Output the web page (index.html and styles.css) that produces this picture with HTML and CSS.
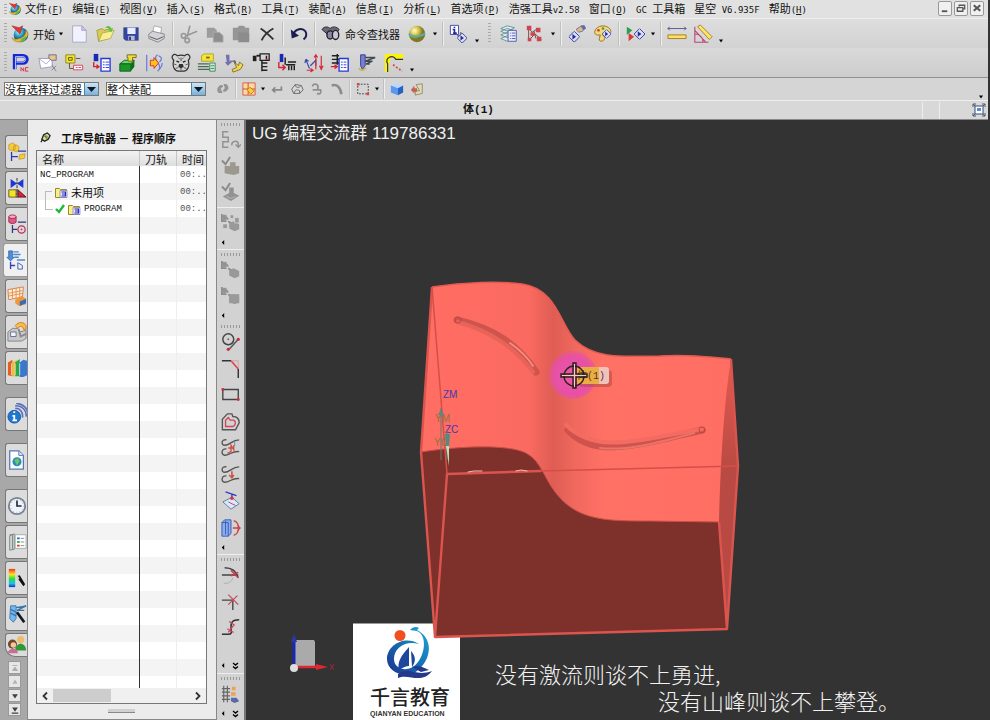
FILE: index.html
```html
<!DOCTYPE html>
<html lang="zh-CN">
<head>
<meta charset="utf-8">
<title>工序导航器</title>
<link rel="stylesheet" href="styles.css">
</head>
<body>
<svg class="defs" aria-hidden="true">
  <defs>
    <linearGradient id="blue" x1="0" y1="0" x2="1" y2="1"><stop offset="0" stop-color="#8cc6f4"/><stop offset="1" stop-color="#1c4fb4"/></linearGradient>
    <radialGradient id="gold" cx=".35" cy=".3"><stop offset="0" stop-color="#fffce0"/><stop offset=".5" stop-color="#d8c84c"/><stop offset="1" stop-color="#7c7a28"/></radialGradient>
    <radialGradient id="globe" cx=".35" cy=".3"><stop offset="0" stop-color="#b8f0ff"/><stop offset=".6" stop-color="#2a9ac8"/><stop offset="1" stop-color="#145a80"/></radialGradient>
    <linearGradient id="spectrum" x1="0" y1="0" x2="0" y2="1"><stop offset="0" stop-color="#f03020"/><stop offset=".3" stop-color="#ffe020"/><stop offset=".55" stop-color="#20e040"/><stop offset=".8" stop-color="#20c0f0"/><stop offset="1" stop-color="#1030d0"/></linearGradient>
    <symbol id="nx" viewBox="0 0 22 22"><circle cx="12" cy="12" r="8" fill="url(#globe)"/><path d="M2 15c3 7 12 6 17-1 2-4 0-6-2-7 1 4-2 8-7 9-3 1-6 1-8-1z" fill="#e8b830" stroke="#8a7020" stroke-width=".5"/><path d="M12 17l6-4c0 4-2 7-6 7z" fill="#58b850"/><path d="M2 2l8 2 4-2-3 9z" fill="#e03830" stroke="#902020" stroke-width=".5"/></symbol>
    <symbol id="caret" viewBox="0 0 6 4"><path d="M1 0.5h4L3 3.5z" fill="#000"/></symbol>
    <symbol id="diamond" viewBox="0 0 12 12"><path d="M6 0l6 6-6 6-6-6z" fill="#d8dcf8" stroke="#2c3a98"/><path d="M4 3l4 3-4 3z" fill="#202c90"/></symbol>
    <symbol id="folder" viewBox="0 0 13 12"><path d="M.5 2.500h4l1 1h6v8H.5z" fill="#f8f080" stroke="#968a30"/><path d="M5 4.500h7v7H5z" fill="#e8e8ff" stroke="#6868b0" stroke-width=".6"/><path d="M6.500 6h4v4h-4M7 8h3" stroke="#2828b8" fill="none" stroke-width="1.200"/></symbol>
    <symbol id="chain" viewBox="0 0 22 22"><path d="M1 4h4l3 3M1 1v8h5M8 9l4 3" fill="none" stroke="#8d8d8d" stroke-width="2"/><path d="M9 11l5-2 6 3v6l-5 2-6-3z" fill="#999"/><path d="M2 2h4v6H2z" fill="#949494"/></symbol>
  </defs>
</svg>

<header class="chrome">
  <nav class="menubar">
    <span class="grip"></span>
    <svg class="brand"><use href="#nx"/></svg>
    <a href="#">文件<span class="en">(<u>F</u>)</span></a>
    <a href="#">编辑<span class="en">(<u>E</u>)</span></a>
    <a href="#">视图<span class="en">(<u>V</u>)</span></a>
    <a href="#">插入<span class="en">(<u>S</u>)</span></a>
    <a href="#">格式<span class="en">(<u>R</u>)</span></a>
    <a href="#">工具<span class="en">(<u>T</u>)</span></a>
    <a href="#">装配<span class="en">(<u>A</u>)</span></a>
    <a href="#">信息<span class="en">(<u>I</u>)</span></a>
    <a href="#">分析<span class="en">(<u>L</u>)</span></a>
    <a href="#">首选项<span class="en">(<u>P</u>)</span></a>
    <a href="#">浩强工具<span class="en">v2.58</span></a>
    <a href="#">窗口<span class="en">(<u>O</u>)</span></a>
    <a href="#"><span class="en">GC </span>工具箱</a>
    <a href="#">星空<span class="en"> V6.935F</span></a>
    <a href="#">帮助<span class="en">(<u>H</u>)</span></a>
    <div class="winbtns">
      <button aria-label="最小化"><svg viewBox="0 0 13 13"><path d="M3 10h6" stroke="#555" stroke-width="2"/></svg></button>
      <button aria-label="还原"><svg viewBox="0 0 13 13"><path d="M4.500 5V3.500h6v4H9M2.500 6h6v4h-6z" fill="none" stroke="#555" stroke-width="1.400"/></svg></button>
      <button aria-label="关闭"><svg viewBox="0 0 13 13"><path d="M3 3.500l7 6M10 3.500l-7 6" stroke="#555" stroke-width="2.200"/></svg></button>
    </div>
  </nav>

  <div class="toolbar standard">
    <span class="grip"></span>
    <button class="wide start"><svg class="ic"><use href="#nx"/></svg>开始<svg class="caret"><use href="#caret"/></svg></button>
    <button aria-label="新建"><svg class="ic" viewBox="0 0 22 22"><path d="M4 2h10l5 5v13H4z" fill="#f2f2fe" stroke="#a4a4cc"/><path d="M14 2v5h5z" fill="#c8c8ea" stroke="#a4a4cc"/></svg></button>
    <button aria-label="打开"><svg class="ic" viewBox="0 0 22 22"><path d="M2 7l6-2 2 2 7-2v10L4 19z" fill="#d8cc58" stroke="#8c8430" stroke-width=".7"/><path d="M4 19L8 10l13-3-4 9z" fill="#f8f090" stroke="#a09838" stroke-width=".7"/><path d="M11 4c3-3 6-2 7 1l2-1-2 5-4-3 2 0c-1-2-3-2-5-2z" fill="#60c048"/></svg></button>
    <button aria-label="保存"><svg class="ic" viewBox="0 0 22 22"><path d="M3 4h16v14H5l-2-2z" fill="#3646a0" stroke="#28347c" stroke-width=".6"/><path d="M7 4h9v7H7z" fill="#e8ecff"/><path d="M8 13h7v5H8z" fill="#b8bcd0"/><path d="M9 14h2v4H9z" fill="#28347c"/></svg></button>
    <button aria-label="打印"><svg class="ic" viewBox="0 0 22 22"><path d="M6 10l2-8 8 2-1 7z" fill="#fff" stroke="#888" stroke-width=".7"/><path d="M2 11l4-3 13 3v5l-7 4-10-4z" fill="#d4d4d8" stroke="#70707a" stroke-width=".8"/><path d="M3 14l8 3 7-3" fill="none" stroke="#505058"/></svg></button>
    <i class="sep"></i>
    <button aria-label="剪切"><svg class="ic" viewBox="0 0 22 22"><g fill="none" stroke="#989898" stroke-width="1.800"><path d="M12 2L9 14M20 8L8 13"/><circle cx="5" cy="13" r="2.500"/><circle cx="9" cy="18" r="2.500"/></g></svg></button>
    <button aria-label="复制"><svg class="ic" viewBox="0 0 22 22"><path d="M2 4h8l3 3v8H2z" fill="#9c9c9c"/><path d="M9 9h7l4 4v7H9z" fill="#8e8e8e" stroke="#b8b8b8" stroke-width=".7"/></svg></button>
    <button aria-label="粘贴"><svg class="ic" viewBox="0 0 22 22"><path d="M2 4h5l2-2h5l2 2h4v14H2z" fill="#969696"/><path d="M8 9h10l2 2v9H8z" fill="#8c8c8c"/></svg></button>
    <button aria-label="删除"><svg class="ic" viewBox="0 0 22 22"><path d="M4 5c5 3 9 7 14 12M18 5C12 8 8 12 5 18" fill="none" stroke="#303030" stroke-width="2"/></svg></button>
    <i class="sep"></i>
    <button aria-label="撤消"><svg class="ic" viewBox="0 0 22 22"><path d="M5 11c2-6 10-7 13-3 2 3 1 7-2 9" fill="none" stroke="#1c1c50" stroke-width="2.200"/><path d="M2 6l1 10 8-3z" fill="#1c1c50"/></svg></button>
    <i class="sep"></i>
    <button class="wide finder"><svg class="ic" viewBox="0 0 22 22"><path d="M1 6c3-4 7-3 9-1 3-3 7-2 10 1l-4 5-8 1z" fill="#6a6a76" stroke="#202028"/><ellipse cx="10" cy="12" rx="3.500" ry="4.500" fill="#8888a0" stroke="#202028" stroke-width="1.500"/><ellipse cx="16" cy="12" rx="3.500" ry="5" fill="#c8c8d8" stroke="#202028" stroke-width="1.500"/></svg>命令查找器</button>
    <button aria-label="显示"><svg class="ic" viewBox="0 0 22 22"><circle cx="11" cy="11" r="9" fill="url(#gold)"/><path d="M2 11c4 4 14 3 18-1" fill="none" stroke="#58b0b0" stroke-width="2"/></svg></button>
    <button class="drop" aria-label="更多"><svg class="caret"><use href="#caret"/></svg></button>
    <i class="sep"></i>
    <button aria-label="信息"><svg class="ic" viewBox="0 0 22 22"><path d="M1.500 1.500h9v10h-9z" fill="#fff" stroke="#3840a0"/><path d="M6 3v1.500M4 6h2v4M4.500 10h4" stroke="#2028a8" stroke-width="1.800" fill="none"/><path d="M9 13h4M13 9v5" stroke="#333"/><use href="#diamond" x="9" y="10" width="11" height="11"/></svg></button>
    <button class="drop low" aria-label="更多"><svg class="caret"><use href="#caret"/></svg></button>
    <span class="grip second"></span>
    <button aria-label="图层"><svg class="ic" viewBox="0 0 22 22"><g fill="#dcebeb" stroke="#4a8080" stroke-width=".8"><path d="M2 16l7-3 7 2-7 4zM2 12l7-3 7 2-7 4zM2 8l7-3 7 2-7 4zM2 5l7-3 8 2-7 4z"/></g><path d="M10 7h9v12h-9z" fill="#eef" stroke="#4858b0"/><path d="M12 10h1M14 10h4M12 13h1M14 13h4M12 16h1M14 16h4" stroke="#4050a8"/></svg></button>
    <button aria-label="装配导航"><svg class="ic" viewBox="0 0 22 22"><path d="M4 5l4 4 6-4M4 5v12M5 17l6-6 7 6M10 8l2 8" fill="none" stroke="#604848"/><g fill="#d04450"><path d="M2 2h5v5H2zM12 4h5v5h-5zM6 9h5v4H6zM13 14h5v5h-5zM3 15h4v4H3z"/></g></svg></button>
    <button class="drop" aria-label="更多"><svg class="caret"><use href="#caret"/></svg></button>
    <i class="sep"></i>
    <button aria-label="编辑对象"><svg class="ic" viewBox="0 0 22 22"><path d="M10 6l6-4 4 2-3 4-4 1z" fill="#e0b878" stroke="#6870a8"/><path d="M15 2l4-1 2 4-3 2z" fill="#606cb0"/><use href="#diamond" x="2" y="8" width="12" height="12"/></svg></button>
    <button aria-label="调色板"><svg class="ic" viewBox="0 0 22 22"><path d="M2 8c2-7 13-8 17-2 2 4-1 5-4 4l-5 1 3 4c0 4-7 6-6 1l1-4c-4 1-7-1-6-4z" fill="#f4d878" stroke="#906c28"/><circle cx="6" cy="7" r="1.500" fill="#d04040"/><circle cx="11" cy="5" r="1.500" fill="#50a050"/><use href="#diamond" x="10" y="6" width="10" height="10"/></svg></button>
    <i class="sep"></i>
    <button aria-label="显示隐藏"><svg class="ic" viewBox="0 0 22 22"><path d="M2 3l6 4-6 5z" fill="#28a048"/><path d="M4 10l6 4-6 5z" fill="#d83838"/><use href="#diamond" x="10" y="5" width="12" height="12"/></svg></button>
    <button class="drop" aria-label="更多"><svg class="caret"><use href="#caret"/></svg></button>
    <i class="sep"></i>
    <button aria-label="测量距离"><svg class="ic" viewBox="0 0 22 22"><path d="M1 5h20M3 3L1 5l2 2M19 3l2 2-2 2" fill="none" stroke="#505098"/><path d="M1 12h20v4H1z" fill="#ffe060" stroke="#a07c28"/></svg></button>
    <button aria-label="测量角度"><svg class="ic" viewBox="0 0 22 22"><path d="M2 3v17h15M2 11c5 0 9 3 9 9M2 7l12 13" fill="none" stroke="#b84870" stroke-width="1.200"/><path d="M5 3l3-2 13 13-3 3z" fill="#ffe468" stroke="#a07c28"/></svg></button>
    <button class="drop low" aria-label="更多"><svg class="caret"><use href="#caret"/></svg></button>
  </div>

  <div class="toolbar machining">
    <span class="grip"></span>
    <div class="even">
      <button aria-label="创建程序"><svg class="ic" viewBox="0 0 22 22"><path d="M4 18V3h9c6 0 6 8 0 8H6" fill="none" stroke="#1828d0" stroke-width="4"/><path d="M5 18V4h8c4 0 4 6 0 6H6" fill="none" stroke="#c8d8ff"/><path d="M11 20v-4l3 4v-4M19 16h-3v4h3" fill="none" stroke="#e02848"/></svg></button>
      <button aria-label="创建刀具"><svg class="ic" viewBox="0 0 22 22"><path d="M1 6h14l1 9-13 2z" fill="#fff" stroke="#9898b8"/><path d="M2 7l7 5 6-6" stroke="#a8a8c8" fill="none"/><path d="M12 2h8v6h-5l-3-2z" fill="#e8c880" stroke="#6868a0"/><path d="M15 13l5 7M20 14l-5 5" stroke="#78789c"/></svg></button>
      <button aria-label="创建几何体"><svg class="ic" viewBox="0 0 22 22"><path d="M2 2h10v9H2z" fill="#f2e430" stroke="#8c841c"/><path d="M5 8V5h4v3zM13 6h5M6 11v6h4" stroke="#5c5410" fill="none"/><path d="M10.500 13.500h10v5h-10z" fill="#fff" stroke="#d83858"/><path d="M13 16h2m1 0h3" stroke="#d83858"/></svg></button>
      <button aria-label="创建方法"><svg class="ic" viewBox="0 0 22 22"><path d="M3 1h5v8H3z" fill="#1828b8"/><path d="M3 10v5h5" fill="none" stroke="#d82030" stroke-width="1.500"/><path d="M6 12l4 3-4 3z" fill="#d82030"/><path d="M11 6h10v14H11z" fill="#fff" stroke="#2838d8" stroke-width="1.500"/><path d="M13 10h2m1 0h4m-7 3h2m1 0h4m-7 3h2m1 0h4" stroke="#2838d8"/></svg></button>
      <button aria-label="创建工序"><svg class="ic" viewBox="0 0 22 22"><path d="M2 12l5-4h11l-4 4z" fill="#68d868" stroke="#145c18"/><path d="M2 12h12v8H2z" fill="#189828" stroke="#145c18"/><path d="M14 12l4-4v7l-4 5z" fill="#0c7018"/><path d="M10 2h10v3h-4v4h-5V5h-1z" fill="#f0dc38" stroke="#706818"/></svg></button>
      <button aria-label="生成刀轨"><svg class="ic" viewBox="0 0 22 22"><path d="M3 2v18M15 2c-8 5 8 11 0 18M16 3c5 2 3 5 1 7M20 11c0 5-2 5-4 8" fill="none" stroke="#6878d8" stroke-width="1.300"/><path d="M7 8h4V5l5 6-5 6v-3H7z" fill="#ffc818" stroke="#d82830"/></svg></button>
      <button aria-label="小熊工具"><svg class="ic" viewBox="0 0 22 22"><path d="M3 8C-1 4 3-1 7 3c3-1 5-1 8 0 4-4 8 1 4 5 2 7-1 12-5 12H8C4 20 1 15 3 8z" fill="#d4d4d4" stroke="#303030" stroke-width="1.300"/><path d="M6 9l3 1M13 10l3-1" stroke="#202020" stroke-width="1.500"/><path d="M9 12h4l1 3-3 2-3-2z" fill="#303030"/><path d="M3 12l3 1m10 0l3-1M5 17l3-1m6 0l3 1M11 5v4M8 5l2 2m4-2l-2 2M11 16v3" stroke="#555" fill="none"/></svg></button>
      <button aria-label="确认刀轨"><svg class="ic" viewBox="0 0 22 22"><path d="M5 3l3-2h10v8H5z" fill="#f4e438" stroke="#b0a428"/><path d="M10 5h4" stroke="#806c10" stroke-width="2"/><path d="M1 12h12M1 15h12M1 18h14" stroke="#486c58" stroke-width="1.500"/><path d="M14 11h6v9h-6z" fill="#c8f0d0" stroke="#408060"/><path d="M15 14h4m-4 3h4" stroke="#408060"/></svg></button>
      <button aria-label="机床"><svg class="ic" viewBox="0 0 22 22"><path d="M2 2h4v8h3L4 14 1 10h2z" fill="#7470b0"/><path d="M6 9h7M11 8l2 3" stroke="#484878"/><path d="M11 10l5 4 1-4 4 3-3 5-8 3-1-3 5-2z" fill="#f4d850" stroke="#806c28"/></svg></button>
      <button aria-label="程序顺序"><svg class="ic" viewBox="0 0 22 22"><path d="M2 3h4v6H2z" fill="#202020"/><path d="M6 3h4" stroke="#202020" stroke-width="2"/><path d="M10 1h10v7H10z" fill="none" stroke="#202020" stroke-width="1.400"/><path d="M12 8v12M12 11h6M12 15h6M12 19h6M17 3v4" stroke="#202020" fill="none" stroke-width="1.600"/><path d="M16 7h4" stroke="#d82840"/></svg></button>
      <button aria-label="后处理"><svg class="ic" viewBox="0 0 22 22"><path d="M3 1h4v9H3z" fill="#1828b8"/><path d="M2 10v6h6M6 13l3 3-3 3" fill="none" stroke="#d82030" stroke-width="1.500"/><path d="M9 5v8M10 13h10M12 10h9M13 14v5m3-5v5m3-5v5" stroke="#202020" stroke-width="1.600"/></svg></button>
      <button aria-label="变换"><svg class="ic" viewBox="0 0 22 22"><path d="M2 7l4 10M2 7l-1 4m1-4l3 2M7 14l6-6v6" fill="none" stroke="#3848b0" stroke-width="1.300"/><path d="M13 3v15M11 5l2-3 2 3M19 3v14M17 14l2 4 2-4M3 19h6m-2-2l3 2-3 2" fill="none" stroke="#d82838" stroke-width="1.300"/></svg></button>
      <button aria-label="车间文档"><svg class="ic" viewBox="0 0 22 22"><path d="M2 3h8M2 7h8M2 11h8M8 1v12" stroke="#202020" stroke-width="1.600"/><path d="M1 15h5m-1-2l3 2-3 2" stroke="#d82030" stroke-width="1.500" fill="none"/><path d="M10 6h10v14H10z" fill="#fff" stroke="#2838d8" stroke-width="1.500"/><path d="M12 10h2m1 0h3m-6 3h2m1 0h3m-6 3h2m1 0h3" stroke="#2838d8"/></svg></button>
      <button aria-label="刀轨"><svg class="ic" viewBox="0 0 22 22"><path d="M4 2h5v12l-3 4-2-4z" fill="#7880d0" stroke="#303890"/><path d="M9 5h11L9 9h8l-7 3h4" fill="none" stroke="#404850" stroke-width="1.600"/><path d="M2 17c3 3 6 2 8-1" stroke="#c8b850" stroke-width="2" fill="none"/></svg></button>
      <button aria-label="倒角"><svg class="ic" viewBox="0 0 22 22"><path d="M1 1h20v5h-8c-3-4-7-1-6 3l-2 3v9H1z" fill="#fff500"/><path d="M4 21v-9c-4-7 6-11 9-5h8" fill="none" stroke="#303820" stroke-width="1.300"/><path d="M10 13l10 7" stroke="#d84040" stroke-width="2" stroke-dasharray="2 2"/></svg></button>
    </div>
    <button class="drop low" aria-label="更多"><svg class="caret"><use href="#caret"/></svg></button>
  </div>

  <div class="selection">
    <div class="combo filter"><select aria-label="过滤器"><option>没有选择过滤器</option></select><i><svg viewBox="0 0 13 12"><path d="M2 4h9l-4.500 5z" fill="#101820"/></svg></i></div>
    <div class="combo scope"><select aria-label="范围"><option>整个装配</option></select><i><svg viewBox="0 0 13 12"><path d="M2 4h9l-4.500 5z" fill="#101820"/></svg></i></div>
    <button aria-label="重置"><svg class="sm" viewBox="0 0 16 16"><path d="M3 12C0 7 5 2 8 5c-4 1-3 4-1 7zM12 3c4 4 0 9-4 7 3-2 3-5 1-7z" fill="#999" stroke="#888"/></svg></button>
    <i class="sep"></i>
    <button aria-label="捕捉"><svg class="sm" viewBox="0 0 16 16"><path d="M1 1h14v14H1z" fill="#f8dc98" stroke="#d85050"/><path d="M7 1v14M1 8h14" stroke="#d03c3c"/><path d="M6 9l3-3 5 4-4 4z" fill="#f8d038" stroke="#c07828"/></svg></button>
    <button class="mini" aria-label="更多"><svg class="caret"><use href="#caret"/></svg></button>
    <button aria-label="返回"><svg class="sm" viewBox="0 0 16 16"><path d="M13 5v4H4M6 6L3 9l3 3" fill="none" stroke="#888" stroke-width="2"/></svg></button>
    <button aria-label="实体"><svg class="sm" viewBox="0 0 16 16"><path d="M2 8l4-5 7 1 2 5-4 4-7 0z" fill="#d8d8d8" stroke="#606060"/><path d="M6 3c1 4 3 4 6 2M5 13c0-4 3-5 6-3v3" fill="none" stroke="#606060"/></svg></button>
    <button aria-label="移动"><svg class="sm" viewBox="0 0 16 16"><path d="M3 5c0-4 7-3 6 1v3M3 9h10M8 13c4 2 5-1 4-4" fill="none" stroke="#909090" stroke-width="2"/></svg></button>
    <button aria-label="曲线"><svg class="sm" viewBox="0 0 16 16"><path d="M2 4c6-2 10 2 11 10" fill="none" stroke="#8c8c8c" stroke-width="3"/></svg></button>
    <i class="sep"></i>
    <button aria-label="框选"><svg class="sm" viewBox="0 0 16 16"><path d="M2 2.500h12v11H2z" fill="none" stroke="#303030" stroke-dasharray="2 1.500"/><path d="M1 1h3v3H1zM12 12h3v3h-3z" fill="#d84848"/></svg></button>
    <button class="mini" aria-label="更多"><svg class="caret"><use href="#caret"/></svg></button>
    <i class="sep"></i>
    <button aria-label="着色"><svg class="sm" viewBox="0 0 16 16"><path d="M1 4l7-3 7 3-6 3z" fill="#b8d8ff"/><path d="M1 4l8 3v8l-8-3z" fill="#5898f0"/><path d="M15 4L9 7v8l6-3z" fill="#2c60c0"/></svg></button>
    <button aria-label="视图"><svg class="sm" viewBox="0 0 16 16"><path d="M7 3l7-1v11l-8 2v-5h5z" fill="#e0dcb0" stroke="#8c8868"/><path d="M1 9l4-5v3h3v4H5v2z" fill="#c86050"/></svg></button>
    <button class="drop end" aria-label="更多"><svg class="caret"><use href="#caret"/></svg></button>
  </div>

  <div class="status">
    <output>体(1)</output>
    <i class="cell"></i><i class="cell"></i>
    <button aria-label="全屏"><svg viewBox="0 0 14 14"><path d="M3 3h8v8H3z" fill="#fff" stroke="#304880"/><path d="M5 5h4v3H5z" fill="#5c88d0"/><path d="M1 4V1h3M10 1h3v3M13 10v3h-3M4 13H1v-3M1 1l2 2M13 1l-2 2M1 13l2-2M13 13l-2-2" fill="none" stroke="#505860"/></svg></button>
  </div>
</header>

<main class="workspace">
  <nav class="tabs">
    <button aria-label="装配导航器"><svg viewBox="0 0 22 24"><g fill="#f8cc38" stroke="#b88818" stroke-width=".7"><path d="M2 4l4-2 3 2v5l-3 2-4-2zM7 6l3-2 3 2v4l-3 2-3-2zM14 15l6-1-1 5-6 1z"/></g><path d="M5 12v10M5 17h7M12 11h9" stroke="#2838a8" stroke-width="1.400"/></svg></button>
    <button aria-label="约束导航器"><svg viewBox="0 0 22 24"><path d="M4 2l7 5-7 5zM18 2l-7 5 7 5z" fill="#1c38d0"/><path d="M2 14h8v8H2z" fill="#f4e428" stroke="#605c20"/><path d="M12 14v8h9z" fill="#d02838" stroke="#601018"/><path d="M11 1v22" stroke="#222" stroke-dasharray="3 1"/></svg></button>
    <button aria-label="部件导航器"><svg viewBox="0 0 22 24"><path d="M2 4v6c2 2 6 2 8 0V4z" fill="#e05888" stroke="#a02850"/><ellipse cx="6" cy="4" rx="4" ry="2" fill="#f8a8c0" stroke="#a02850"/><path d="M6 13v9M6 18h5M12 10h9" stroke="#303878" stroke-width="1.400"/><circle cx="16" cy="18" r="4" fill="none" stroke="#b83060" stroke-width="1.400"/><circle cx="16" cy="18" r="1" fill="#b83060"/></svg></button>
    <button class="active" aria-label="工序导航器"><svg viewBox="0 0 22 24"><path d="M3 2h4v7h2l-4 4-4-4h2z" fill="#5090d8" stroke="#3070b8"/><path d="M8 3h6M8 6h8M9 9h5M12 12h9" stroke="#4c88c8" stroke-width="1.500"/><path d="M5 14v8M5 18h5" stroke="#3840c0" stroke-width="1.500"/><path d="M13 15l5 3v4h-5z" fill="none" stroke="#3858b8"/></svg></button>
    <button aria-label="加工特征"><svg viewBox="0 0 22 24"><path d="M1 5l17-3-1 11-15 3z" fill="#fff0d0" stroke="#d87848"/><path d="M2 9l15-3M2 12l15-3M6 4v11M10 3v11M14 3v10" stroke="#e08c58"/><path d="M9 16l7-4 5 3v6l-8 2-4-3z" fill="#f09838"/><path d="M14 18l7-3v5l-7 3z" fill="#386cb8"/></svg></button>
    <button aria-label="机床导航"><svg viewBox="0 0 22 24"><path d="M9 5c4-5 10-4 12 0v4h-3c0-4-4-4-6-1z" fill="#f4c040" stroke="#d87030"/><path d="M1 12l5-4h6l2 4 7-2v9l-5 3H1z" fill="#c8c8c8" stroke="#808080"/><path d="M4 12h6v5H4z" fill="#f8f8f8" stroke="#5868a0"/><path d="M13 9l2 8 6-3" fill="none" stroke="#888" stroke-width="2"/></svg></button>
    <button aria-label="重用库"><svg viewBox="0 0 22 24"><path d="M1 6l5-3v18l-5-1z" fill="#e06020"/><path d="M6 6l5-3v18H6z" fill="#f4bc38"/><path d="M9 6l5-4v19H9z" fill="#28a848"/><path d="M14 6l4-3 4 1v16l-4 2h-4z" fill="#3878d0"/><path d="M5 7v13M9 7v13M14 7v13" stroke="#fff" stroke-width=".7"/></svg></button>
    <button class="spaced" aria-label="网络"><svg viewBox="0 0 22 24"><path d="M9 6c5-1 9 4 8 10M9 3c7-1 13 5 12 12M10 0c8 1 13 6 13 12" fill="none" stroke="#5c70c0" stroke-width="1.800"/><circle cx="8" cy="15" r="7" fill="#1c78d0" stroke="#1858a0"/><path d="M7 10h2M6 14h2v5M6 19h5" stroke="#fff" stroke-width="2" fill="none"/></svg></button>
    <button class="spaced" aria-label="浏览器"><svg viewBox="0 0 22 24"><path d="M3 2h10l5 5v15H3z" fill="#fff" stroke="#5878b8" stroke-width="1.400"/><path d="M13 2v5h5" fill="#d8e4f8" stroke="#5878b8"/><circle cx="11" cy="14" r="5" fill="#2c8cb8"/><path d="M8 12l4-2 2 3-3 5z" fill="#68c868"/></svg></button>
    <button class="spaced" aria-label="历史"><svg viewBox="0 0 22 24"><circle cx="11" cy="12" r="9" fill="#f0f4fa" stroke="#788494" stroke-width="2"/><circle cx="11" cy="12" r="7" fill="none" stroke="#9ca8b8" stroke-dasharray="1 2.600"/><path d="M11 6v6h5" fill="none" stroke="#202838" stroke-width="1.800"/></svg></button>
    <button aria-label="系统材料"><svg viewBox="0 0 22 24"><path d="M3 5l5-2v17l-5 1zM3 4h3v16" fill="#d4d8d8" stroke="#788080"/><path d="M9 4h12v15H9z" fill="#fff" stroke="#a0a8a8"/><path d="M11 7h3v2h-3z" fill="#3070d0"/><path d="M11 11h3v2h-3z" fill="#30b040"/><path d="M11 15h3v2h-3z" fill="#e04040"/><path d="M15 8h4m-4 4h4m-4 4h4" stroke="#888"/></svg></button>
    <button aria-label="颜色"><svg viewBox="0 0 22 24"><path d="M2 2h7v20H2z" fill="url(#spectrum)"/><path d="M10 10l4-1 6 10-2 2z" fill="#101010"/><path d="M10 9l3 4" stroke="#d8d8d8" stroke-width="2"/></svg></button>
    <button aria-label="刀具"><svg viewBox="0 0 22 24"><path d="M4 3h6v14l-3 4-4-4z" fill="#78b8e8" stroke="#3878b0"/><path d="M4 7l6 3m-6 1l6 3M10 5l11-2-10 5h8" stroke="#3874b0" stroke-width="1.500" fill="none"/><path d="M11 10l8 11" stroke="#101820" stroke-width="3"/></svg></button>
    <button class="clip" aria-label="角色"><svg viewBox="0 0 22 24"><circle cx="15" cy="6" r="4" fill="#f0bc68"/><path d="M9 18c0-10 12-10 12 0z" fill="#309838"/><circle cx="6" cy="11" r="5" fill="#704828"/><circle cx="7" cy="12" r="3" fill="#f0c8a0"/><path d="M1 21c0-6 11-6 11 0z" fill="#c86c98"/></svg></button>
    <div class="steppers">
      <button aria-label="首页"><svg viewBox="0 0 12 12"><path d="M3 3h6M6 5l3 4H3z" stroke="#aaa" fill="#aaa"/></svg></button>
      <button aria-label="上移"><svg viewBox="0 0 12 12"><path d="M6 3l3 5H3z" fill="#b4b4b4"/></svg></button>
      <button aria-label="下移"><svg viewBox="0 0 12 12"><path d="M6 9L2.500 4h7z" fill="#404040"/></svg></button>
      <button aria-label="末页"><svg viewBox="0 0 12 12"><path d="M6 8L2.500 3h7zM2 9h8v1.500H2z" fill="#404040"/></svg></button>
    </div>
  </nav>

  <section class="navigator">
    <h1><svg viewBox="0 0 12 12"><path d="M2 8L4 3l4-2 3 3-2 4-4 2z" fill="#d4d8a8" stroke="#222" stroke-width="1.400"/><path d="M3 8l-2 3M5 4l3 3" stroke="#222" stroke-width="1.400"/><path d="M6 3l3 2-3 2z" fill="#98a830"/></svg>工序导航器 － 程序顺序</h1>
    <div class="tree">
      <table>
        <thead><tr><th class="name">名称</th><th class="path">刀轨</th><th>时间</th></tr></thead>
        <tbody>
          <tr><td>NC_PROGRAM</td><td></td><td class="time">00:..</td></tr>
          <tr><td class="child"><div class="node"><svg class="fold"><use href="#folder"/></svg><span class="zh">未用项</span></div></td><td></td><td class="time">00:..</td></tr>
          <tr><td class="child last"><div class="node"><svg class="tick" viewBox="0 0 10 10"><path d="M1 5l3 3 5-7" fill="none" stroke="#20b838" stroke-width="2.400"/></svg><svg class="fold"><use href="#folder"/></svg>PROGRAM</div></td><td></td><td class="time">00:..</td></tr>
        </tbody>
      </table>
      <div class="rows"><i class="c1"></i><i class="c2"></i></div>
      <div class="hscroll"><svg viewBox="0 0 8 10"><path d="M6 1.500L2.500 5 6 8.500" fill="none" stroke="#333" stroke-width="1.800"/></svg><div class="track"><i></i></div><svg viewBox="0 0 8 10"><path d="M2 1.500L5.500 5 2 8.500" fill="none" stroke="#333" stroke-width="1.800"/></svg></div>
    </div>
    <div class="splitter"><i></i></div>
  </section>

  <aside class="sidebar">
    <div class="group">
      <span class="hgrip"></span>
      <button aria-label="曲线"><svg class="ic" viewBox="0 0 22 22"><path d="M8 2H2v6h6v5H2v6h6M12 17c-1-5 6-6 7-2v3m-3-2l3 3 3-3" fill="none" stroke="#929292" stroke-width="1.600"/></svg></button>
      <button aria-label="校验"><svg class="ic" viewBox="0 0 22 22"><path d="M1 5l4 4 5-8" fill="none" stroke="#8a8a8a" stroke-width="2.200"/><path d="M4 11h6V7h6v4h4v8l-6 2-10-2z" fill="#9b9890"/></svg></button>
      <button aria-label="过切检查"><svg class="ic" viewBox="0 0 22 22"><path d="M1 5l4 4 5-8" fill="none" stroke="#8a8a8a" stroke-width="2.200"/><path d="M2 16l7-4V6h5v6l6 3-9 6z" fill="#929292"/><path d="M6 16l5 2 5-2" stroke="#bbb" fill="none"/></svg></button>
      <i class="rule"></i>
      <button aria-label="列表"><svg class="ic" viewBox="0 0 22 22"><use href="#chain"/><path d="M10 2h4v4h-4zM15 5h5v6h-5zM2 12h5v5H2z" fill="#999" stroke="#ddd" stroke-width=".7"/></svg></button>
      <span class="more"><svg viewBox="0 0 5 6"><path d="M4 0v6L1 3z"/></svg></span>
    </div>
    <div class="group ruled">
      <span class="hgrip"></span>
      <button aria-label="变换刀轨"><svg class="ic"><use href="#chain"/></svg></button>
      <button aria-label="复制刀轨"><svg class="ic" viewBox="0 0 22 22"><use href="#chain"/><path d="M9 9h11v10H9z" fill="#999"/></svg></button>
      <span class="more"><svg viewBox="0 0 5 6"><path d="M4 0v6L1 3z"/></svg></span>
    </div>
    <div class="group curves">
      <span class="hgrip"></span>
      <button aria-label="基本曲线"><svg class="ic" viewBox="0 0 22 22"><circle cx="8" cy="8" r="6" fill="none" stroke="#444" stroke-width="1.600"/><circle cx="8" cy="8" r="1" fill="#666"/><path d="M9 19L19 8" stroke="#555" stroke-width="1.600"/><circle cx="8" cy="19" r="1.800" fill="#c83040"/><circle cx="19" cy="8" r="1.800" fill="#c83040"/></svg></button>
      <button aria-label="倒斜角"><svg class="ic" viewBox="0 0 22 22"><path d="M1 2h10M19 11v10" stroke="#333" stroke-width="1.600"/><path d="M11 2l8 9" stroke="#d84048" stroke-width="1.600"/><path d="M11 2h8v8" fill="none" stroke="#e08888" stroke-width=".7"/></svg></button>
      <button aria-label="矩形"><svg class="ic" viewBox="0 0 22 22"><path d="M2 5h17v11H2z" fill="none" stroke="#444" stroke-width="1.500"/><circle cx="2" cy="5" r="1.600" fill="#c83040"/><circle cx="19" cy="16" r="1.600" fill="#c83040"/></svg></button>
      <button aria-label="偏置曲线"><svg class="ic" viewBox="0 0 22 22"><path d="M1.500 19.500V8L7 2h5l1 3c6 0 7 3 7 7l-4 7.500z" fill="none" stroke="#555" stroke-width="1.500"/><path d="M5 16V9l3-3 2 3h4c3 2 2 6-1 7z" fill="none" stroke="#d04858" stroke-width="1.500"/></svg></button>
      <button aria-label="桥接曲线"><svg class="ic" viewBox="0 0 22 22"><path d="M6 2C0 1 0 8 4 8c6 0 8-6 16-6M6 12c-6-1-6 7-2 7 6 0 8-5 16-4" fill="none" stroke="#555" stroke-width="1.500"/><path d="M7 17l4-2V8l3 5V8M8 11h6" fill="none" stroke="#d05048" stroke-width="1.500"/><path d="M15 4v5" stroke="#6888c0"/></svg></button>
      <button aria-label="连结曲线"><svg class="ic" viewBox="0 0 22 22"><path d="M6 2C0 1 0 8 4 8c6 0 8-6 16-6M6 12c-6-1-6 7-2 7 6 0 8-5 16-4" fill="none" stroke="#555" stroke-width="1.500"/><path d="M12 7v7m-3-3l3 3 2-3" fill="none" stroke="#d05048" stroke-width="1.700"/></svg></button>
      <button aria-label="投影曲线"><svg class="ic" viewBox="0 0 22 22"><path d="M2 12l10-5 8 7-9 6z" fill="#d8e8fa" stroke="#5878a8"/><path d="M5 1l12 4M12 3v5" stroke="#3038c0" stroke-width="1.500"/><circle cx="12" cy="8" r="2" fill="#d03848"/><path d="M8 12l8 4" stroke="#c04050"/></svg></button>
      <button aria-label="缠绕曲线"><svg class="ic" viewBox="0 0 22 22"><path d="M1 5l3-3h7v15l-3 3H1z" fill="#88acf0" stroke="#3858b0"/><path d="M5 3v15M1 5h7v15" stroke="#3858b0" fill="none"/><path d="M14 3c7 2 7 14 0 16M13 11h8m-3-3l3 3-3 3" fill="none" stroke="#c84448" stroke-width="1.400"/></svg></button>
      <span class="more"><svg viewBox="0 0 5 6"><path d="M4 0v6L1 3z"/></svg></span>
    </div>
    <div class="group ruled edits">
      <span class="hgrip"></span>
      <button aria-label="编辑曲线"><svg class="ic" viewBox="0 0 22 22"><path d="M4 3c8 0 13 4 15 11M1 11h18" fill="none" stroke="#444" stroke-width="1.500"/><path d="M11 6l8 8M11 12l8-4" stroke="#c83850" stroke-width="1.500"/><path d="M3 20c5 1 9-2 10-6" stroke="#aaa" fill="none"/></svg></button>
      <button aria-label="修剪曲线"><svg class="ic" viewBox="0 0 22 22"><path d="M1 10h12v11" fill="none" stroke="#444" stroke-width="1.500"/><path d="M8 4l11 11M18 5L8 15" stroke="#c84858" stroke-width="1.300"/></svg></button>
      <button aria-label="曲线长度"><svg class="ic" viewBox="0 0 22 22"><path d="M1 19h7c5 0 3-3 3-8s1-8 9-8" fill="none" stroke="#333" stroke-width="1.700"/><path d="M7 13l7 4M9 5l6 4M8 17l6-8" stroke="#c84858" stroke-width="1.400"/></svg></button>
    </div>
    <span class="more both"><svg viewBox="0 0 5 6"><path d="M4 0v6L1 3z"/></svg><svg viewBox="0 0 7 8"><path d="M1 1l2.500 2L6 1M1 4.500l2.500 2L6 4.500" fill="none" stroke="#000" stroke-width="1.400"/></svg></span>
    <div class="group ruled">
      <span class="hgrip"></span>
      <button aria-label="阵列"><svg class="ic" viewBox="0 0 22 22"><path d="M3 2v18M7 2v18M1 5h9M1 9h9M1 13h9M1 17h9" stroke="#666" stroke-width="1.300"/><path d="M12 3h4v4h-4zM11 9h5v4h-5z" fill="#f0a050"/><path d="M11 15h6l3 4-5 2-4-2z" fill="#5868a8"/></svg></button>
      <span class="more both"><svg viewBox="0 0 5 6"><path d="M4 0v6L1 3z"/></svg><svg viewBox="0 0 7 8"><path d="M1 1l2.500 2L6 1M1 4.500l2.500 2L6 4.500" fill="none" stroke="#000" stroke-width="1.400"/></svg></span>
    </div>
  </aside>

  <section class="viewport">
    <svg class="scene" viewBox="246 120 744 600" preserveAspectRatio="xMinYMin meet" role="img" aria-label="体(1)">
      <defs>
        <linearGradient id="skin" gradientUnits="userSpaceOnUse" x1="430" y1="0" x2="738" y2="0"><stop offset="0" stop-color="#ff6d63"/><stop offset=".32" stop-color="#fb6a60"/><stop offset=".4" stop-color="#df5d54"/><stop offset=".47" stop-color="#f0685e"/><stop offset=".56" stop-color="#ff7065"/><stop offset="1" stop-color="#ff6e63"/></linearGradient>
        <linearGradient id="side" gradientUnits="userSpaceOnUse" x1="0" y1="365" x2="0" y2="470"><stop offset="0" stop-color="#e2594f"/><stop offset="1" stop-color="#b94a43"/></linearGradient>
        <radialGradient id="pulse" gradientUnits="userSpaceOnUse" cx="573" cy="376" r="24"><stop offset="0" stop-color="#ee58a0"/><stop offset=".75" stop-color="#e650a8"/><stop offset="1" stop-color="#e650a8" stop-opacity=".5"/></radialGradient>
        <linearGradient id="swoosh" x1="0" y1="1" x2="1" y2="0"><stop offset="0" stop-color="#20308c"/><stop offset=".5" stop-color="#1470b4"/><stop offset="1" stop-color="#20a8d8"/></linearGradient>
      </defs>
      <path d="M353 623.500h107v97H353z" fill="#fff"/>
      <g>
        <circle cx="400" cy="635.500" r="5.500" fill="#f05020"/>
        <path d="M410 630c4-4 7-3 9-2l-2 2c10 5 15 16 10 28-3 7-8 12-14 16-14 3-26-4-26-15 0-14 18-24 32-15-14-4-25 4-25 15 0 9 10 12 17 9 12-5 19-31 6-37z" fill="url(#swoosh)"/>
        <path d="M409 647v19c-3 0-7 2-10 4-2-8 2-14 10-23zM411 651c5 5 5 11 1 16z" fill="#1d489c"/>
        <path d="M398 674c12-8 17 3 34-3-11 14-23 2-34 7zM412 667c7-3 12 1 17 3l-8 2z" fill="#24388c"/>
        <text class="logo-zh" x="370" y="705">千言教育</text>
        <text class="logo-en" x="370" y="716">QIANYAN EDUCATION</text>
      </g>
      <path d="M432 287C465 282 500 281 522 284C557 289 560 324 575 340C596 360 625 356 660 356C690 354 710 357 731 359L738 466L727 629L435 637L421 452z" fill="url(#skin)"/>
      <path d="M421 452C460 446 508 444 526 453C543 462 544 482 562 500C583 521 611 521 650 521L719 522L727 629L435 637z" fill="#7e302b"/>
      <path d="M731 359L738 466L727 629L719 522C720 470 724 400 731 359z" fill="url(#side)"/>
      <g fill="none" stroke="#db554e" stroke-width="2.400" stroke-linejoin="round">
        <path d="M421 452L435 637L727 629L738 466L731 359M727 629L719 522M435 637L447 474L541 471M421 452L432 287"/>
        <path d="M421 452C460 446 508 444 526 453C543 462 544 482 562 500C583 521 611 521 650 521L719 522" stroke="#ca5049" stroke-width="1"/>
        <path d="M432 287L447 474M541 471L738 466" stroke="#d35049" stroke-width="1.500"/>
        <path d="M432 287C465 282 500 281 522 284C557 289 560 324 575 340C596 360 625 356 660 356C690 354 710 357 731 359" stroke="#e15b52" stroke-width="1.500"/>
      </g>
      <g fill="none" stroke-linecap="round">
        <path d="M457 320C495 329 518 345 536 372" stroke="#cf544c" stroke-width="7"/><path d="M458 322C492 332 514 347 533 372" stroke="#e8645a" stroke-width="4"/><path d="M510 343C520 350 528 358 533 366" stroke="#f68b80" stroke-width="2"/>
        <path d="M568 430C594 458 633 446 702 430" stroke="#cf534c" stroke-width="7"/><path d="M566 425C596 454 634 441 702 429" stroke="#f46b61" stroke-width="4"/><path d="M600 448C630 451 660 442 694 433" stroke="#e8756a" stroke-width="2"/>
        <circle cx="458" cy="320" r="3" stroke="#bd4942"/><circle cx="702" cy="430" r="3" stroke="#bd4942"/>
        <path d="M468 472l6-1 8 0M516 471l5-1 6 1" stroke="#efc0b4"/>
      </g>
      <g class="axis-label"><text class="z" x="443" y="398">ZM</text><text class="y" x="435" y="422">YM</text><text class="z" x="445" y="433">ZC</text><text class="y" x="434" y="446">YC</text></g>
      <path d="M441 408v52M447 430v30" stroke="#687c68"/><path d="M438 415l3-6 3 6zM445 434h5l-1 12h-3z" fill="#508c80"/><path d="M446 446h3v20z" fill="#c4dcc0"/>
      <circle cx="573" cy="375" r="24" fill="url(#pulse)"/>
      <rect x="579" y="370" width="33" height="17" rx="4" fill="#a94640" opacity=".5"/><rect x="577" y="367" width="32" height="17" rx="3" fill="#efc3bb"/><path d="M577 367h22v17h-22z" fill="#e8ae42"/>
      <text class="tip" x="577" y="379">体(1)</text>
      <g fill="none" stroke="#302020" stroke-width="1.400"><circle cx="574" cy="376" r="10"/><path d="M573 363h3v11h11v3h-11v11h-3v-11h-12v-3h12z"/></g><path d="M574.500 364v23M562 375.500h24" stroke="#e8d4c0"/>
      <path d="M295 640h19l1 2v25h-20z" fill="#aaa"/><path d="M294 668v-28" stroke="#1728b8" stroke-width="3"/><path d="M291 642l3-8 3 8z" fill="#2838a8"/><path d="M297 667h20" stroke="#e02830" stroke-width="2.500"/><path d="M316 664l12 3-12 3z" fill="#e02830"/><circle cx="294" cy="668" r="4" fill="#ddd"/><path d="M330 664l4 6m0-6l-4 6" stroke="#9c2830"/>
    </svg>
    <p class="watermark">UG 编程交流群 119786331</p>
    <div class="caption"><p>没有激流则谈不上勇进,</p><p class="second-line">没有山峰则谈不上攀登。</p></div>
  </section>
</main>
</body>
</html>
```
FILE: styles.css
```css
* { box-sizing: border-box; }
body {
  margin: 0;
  height: 100vh;
  display: flex;
  flex-direction: column;
  overflow: hidden;
  background: #333;
  color: #111;
  font: 11px/16px "Noto Sans CJK SC", sans-serif;
}
p, h1 { margin: 0; }
.defs { position: absolute; width: 0; height: 0; }
button {
  display: flex;
  align-items: center;
  justify-content: center;
  padding: 0;
  border: 0;
  background: none;
  color: inherit;
  font: inherit;
  flex: none;
}
svg { display: block; flex: none; }
.ic { width: 20px; height: 20px; }
.sm { width: 14px; height: 14px; }
.caret { width: 6px; height: 4px; }

/* Top bars */
.chrome { flex: none; margin-right: 2px; background: #d5d5d5; }
.menubar {
  display: flex;
  align-items: center;
  gap: 9px;
  height: 18px;
  padding-left: 3px;
  background: #e1e1e1;
}
.menubar a { color: inherit; text-decoration: none; white-space: nowrap; }
.en { font: 9px/16px "DejaVu Sans Mono", monospace; white-space: pre; }
.menubar .grip { margin-right: -8px; }
.brand { width: 14px; height: 16px; margin-right: -6px; }
.winbtns { display: flex; gap: 2px; margin: 0 4px 2px auto; }
.winbtns button { width: 14px; height: 15px; border: 1px solid #999; border-radius: 2px; background: #f0f0f0; }
.winbtns svg { width: 12px; height: 12px; }
.grip { align-self: stretch; width: 3px; margin: 4px 1px; flex: none; background: repeating-linear-gradient(#aaa 0 1px, transparent 1px 3px); }
.toolbar { display: flex; align-items: center; height: 30px; padding-left: 3px; }
.standard { border-top: 1px solid #eee; background: linear-gradient(#dedede, #d2d2d2); }
.machining { border-bottom: 1px solid #909090; background: linear-gradient(#d9d9d9, #cdcdcd); }
.toolbar > button { width: 26px; height: 26px; }
.toolbar > .wide { width: auto; gap: 2px; white-space: nowrap; }
.toolbar > .start { gap: 3px; margin: 0 2px; }
.toolbar > .drop { width: 10px; }
.toolbar > .low { align-items: flex-end; padding-bottom: 4px; }
.sep { width: 2px; height: 24px; margin: 0 2px; flex: none; border-left: 1px solid #c0c0c0; border-right: 1px solid #eee; }
.toolbar > .second { margin-left: 6px; margin-right: 5px; }
.toolbar > .finder { gap: 4px; margin: 0 4px 0 3px; }
.even { display: flex; width: 399px; }
.even button { flex: 1; }
.selection { display: flex; align-items: center; height: 23px; padding-left: 4px; border-bottom: 1px solid #eee; }
.selection > button { width: 20px; height: 20px; }
.selection > .mini { width: 8px; }
.selection > .end { width: 14px; margin-left: auto; align-items: flex-end; }
.selection .sep { height: 20px; }
.combo { display: flex; height: 14px; margin-right: 7px; border: 1px solid #777; background: #fff; }
.filter { width: 95px; }
.scope { width: 100px; }
.combo select { flex: 1; min-width: 0; height: 12px; padding: 0; border: 0; background: #fff; color: #111; appearance: none; font: 11px/12px "Noto Sans CJK SC", sans-serif; }
.combo i { width: 14px; background: linear-gradient(#c9e6f8, #78b0dc); border-left: 1px solid #58809c; }
.combo i svg { width: 13px; height: 12px; }
.status { display: flex; align-items: center; height: 19px; border-bottom: 1px solid #888; background: #d8d8d8; }
.status output { flex: 1; text-align: center; font: bold 11px/18px "Liberation Mono", "Noto Sans CJK SC", monospace; padding-left: 35px; }
.status .cell { width: 17px; height: 17px; border-left: 1px solid #eee; }
.status .cell + .cell { width: 31px; }
.status button { width: 18px; }
.status button svg { width: 14px; height: 14px; }

/* Work area */
.workspace { flex: 1; min-height: 0; display: flex; }
.tabs { flex: none; width: 28px; display: flex; flex-direction: column; align-items: flex-end; gap: 2px; padding-top: 15px; background: #a8a8a8; border-right: 1px solid #888; }
.tabs > button { width: 22px; height: 34px; border: 1px solid #777; border-right: 0; border-radius: 3px 0 0 3px; background: #dcdcdc; }
.tabs > button svg { width: 20px; height: 22px; }
.tabs > .active { width: 24px; background: #f0f0f0; border-color: #999; }
.tabs > .spaced { margin-top: 10px; }
.tabs > .clip { height: 24px; align-items: flex-start; overflow: hidden; border-bottom-left-radius: 10px; }
.steppers { width: 19px; display: flex; flex-direction: column; gap: 1px; padding-top: 2px; }
.steppers button { width: 13px; height: 13px; border: 1px solid #999; background: #e6e6e6; }
.steppers svg { width: 10px; height: 10px; }
.navigator { flex: none; width: 189px; display: flex; flex-direction: column; padding: 0 9px 0 8px; background: #ececec; border-right: 1px solid #888; border-bottom: 1px solid #888; }
.navigator h1 { display: flex; align-items: center; gap: 10px; height: 30px; padding: 5px 0 0 4px; font-size: 11px; font-weight: 700; white-space: nowrap; }
.navigator h1 svg { width: 11px; height: 11px; }
.tree { flex: 1; display: flex; flex-direction: column; border: 1px solid #777; background: #fff; }
table { width: 100%; border-collapse: separate; border-spacing: 0; table-layout: fixed; }
th { height: 15px; padding: 0 0 0 5px; background: linear-gradient(#f2f2f2, #dedede); font: 11px/14px "Noto Sans CJK SC", sans-serif; text-align: left; border-right: 1px solid #c4c4c4; }
th:last-child { border: 0; }
.name { width: 103px; }
.path { width: 37px; }
td { height: 17px; padding: 0 0 0 3px; font: 9px/16px "Liberation Mono", monospace; white-space: nowrap; overflow: hidden; border-right: 1px solid #eee; }
td:first-child { border-right: 1px solid #333; }
td:last-child { border-right: 0; }
tbody tr:nth-child(even) { background: #f4f4f4; }
.node { display: flex; align-items: center; gap: 3px; height: 16px; }
.fold { width: 13px; height: 12px; }
.tick { width: 10px; height: 10px; }
td.child { padding-left: 18px; background: linear-gradient(#bbb, #bbb) 8px 8px / 7px 1px no-repeat, linear-gradient(#bbb, #bbb) 8px 8px / 1px 9px no-repeat; }
td.last { background: linear-gradient(#bbb, #bbb) 8px 0 / 1px 9px no-repeat, linear-gradient(#bbb, #bbb) 8px 9px / 8px 1px no-repeat; }
.zh { font: 11px/16px "Noto Sans CJK SC", sans-serif; }
.time { color: #555; }
.rows { flex: 1; display: flex; background: repeating-linear-gradient(#f4f4f4 0 17px, #fff 17px 34px); }
.rows .c1 { width: 103px; border-right: 1px solid #333; }
.rows .c2 { width: 37px; border-right: 1px solid #eee; }
.hscroll { display: flex; align-items: center; gap: 4px; height: 15px; padding: 0 4px; background: #f0f0f0; }
.hscroll svg { width: 8px; height: 10px; }
.track { flex: 1; height: 13px; }
.track i { display: block; width: 42%; height: 100%; background: #cdcdcd; }
.splitter { height: 15px; padding-top: 5px; }
.splitter i { display: block; width: 27px; height: 4px; margin: 0 auto; background: #d0d0d0; border-bottom: 1px solid #888; }

/* Vertical toolbar */
.sidebar { flex: none; width: 29px; display: flex; flex-direction: column; background: #d2d2d2; border-right: 2px solid #777; }
.group { display: flex; flex-direction: column; }
.group button { height: 26px; }
.ruled { border-top: 1px solid #eee; }
.hgrip { height: 3px; margin: 3px 4px 1px; flex: none; background: repeating-linear-gradient(90deg, #999 0 1px, transparent 1px 3px); }
.rule { height: 1px; margin: 2px 0; background: #eee; }
.more { display: flex; align-items: center; justify-content: space-between; height: 13px; padding: 0 5px 0 4px; }
.more svg { width: 4px; height: 5px; }
.more svg + svg { width: 7px; height: 8px; }
.curves { height: 232px; }
.curves button { flex: 1; }
.edits { flex: 1; }
.sidebar > .both { padding-bottom: 2px; }

/* Graphics area */
.viewport { flex: 1; min-width: 0; position: relative; background: #333; }
.scene { width: 100%; height: 100%; }
.axis-label { font: 10px "Liberation Sans", sans-serif; }
.axis-label .z { fill: #4438b0; }
.axis-label .y { fill: #8c7440; }
.tip { font: 10px "Liberation Mono", "Noto Sans CJK SC", monospace; fill: #5c3030; }
.logo-zh { font: 500 20px "Noto Sans CJK SC", sans-serif; fill: #222; }
.logo-en { font: bold 7px "Liberation Sans", sans-serif; fill: #333; }
.watermark { position: absolute; top: 4px; left: 6px; color: #f0f0f0; font: 17px/20px "Liberation Sans", "Noto Sans CJK SC", sans-serif; white-space: nowrap; }
.caption { position: absolute; left: 249px; bottom: 6px; color: #f2f2f2; font: 300 22px/27px "Noto Sans CJK SC", sans-serif; white-space: nowrap; }
.second-line { padding-left: 163px; }
```
